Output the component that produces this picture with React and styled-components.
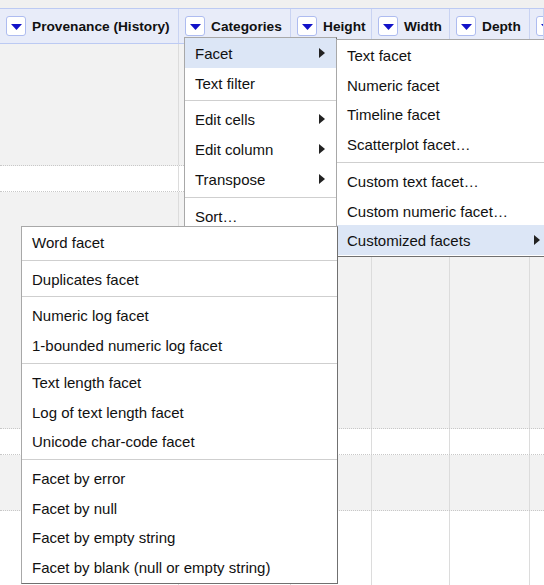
import React from "react";
import styled, { createGlobalStyle } from "styled-components";

const GlobalStyle = createGlobalStyle`
  html, body {
    margin: 0;
    padding: 0;
    background: #ffffff;
  }
  body {
    font-family: "Liberation Sans", Arial, sans-serif;
    color: #111;
  }
`;

const columns = [
  { label: "Provenance (History)", width: 179 },
  { label: "Categories", width: 112 },
  { label: "Height", width: 81 },
  { label: "Width", width: 78 },
  { label: "Depth", width: 80 },
  { label: "", width: null },
];

const rows = [
  { height: 121, shade: true },
  { height: 25, shade: false },
  { height: 236, shade: true },
  { height: 25, shade: false },
  { height: 55, shade: true },
  { height: 100, shade: false, last: true },
];

const columnMenu = [
  { label: "Facet", sub: true, active: true },
  { label: "Text filter" },
  { sep: true },
  { label: "Edit cells", sub: true },
  { label: "Edit column", sub: true },
  { label: "Transpose", sub: true },
  { sep: true },
  { label: "Sort…" },
  { sep: true },
  { label: "View", sub: true },
  { label: "Reconcile", sub: true },
];

const facetMenu = [
  { label: "Text facet" },
  { label: "Numeric facet" },
  { label: "Timeline facet" },
  { label: "Scatterplot facet…" },
  { sep: true },
  { label: "Custom text facet…" },
  { label: "Custom numeric facet…" },
  { label: "Customized facets", sub: true, active: true },
];

const customMenu = [
  { label: "Word facet" },
  { sep: true },
  { label: "Duplicates facet" },
  { sep: true },
  { label: "Numeric log facet" },
  { label: "1-bounded numeric log facet" },
  { sep: true },
  { label: "Text length facet" },
  { label: "Log of text length facet" },
  { label: "Unicode char-code facet" },
  { sep: true },
  { label: "Facet by error" },
  { label: "Facet by null" },
  { label: "Facet by empty string" },
  { label: "Facet by blank (null or empty string)" },
];

function DownTriangle() {
  return (
    <svg width="11" height="6" viewBox="0 0 11 6" aria-hidden="true">
      <polygon points="0,0 11,0 5.5,6" fill="#1212c8" />
    </svg>
  );
}

function RightTriangle() {
  return (
    <svg width="6" height="10" viewBox="0 0 6 10" aria-hidden="true">
      <polygon points="0,0 6,5 0,10" fill="#222" />
    </svg>
  );
}

function Menu({ items, top, left, width, z }) {
  return (
    <MenuBox $top={top} $left={left} $width={width} $z={z}>
      {items.map((item, i) =>
        item.sep ? (
          <MenuSep key={`sep-${i}`} />
        ) : (
          <MenuItem key={item.label} $active={item.active}>
            <span>{item.label}</span>
            {item.sub && <RightTriangle />}
          </MenuItem>
        )
      )}
    </MenuBox>
  );
}

export default function App() {
  return (
    <Page>
      <GlobalStyle />
      <TopStrip />
      <HeaderRow>
        {columns.map((col, i) => (
          <HeaderCell key={`h-${i}`} $w={col.width}>
            <DropButton>
              <DownTriangle />
            </DropButton>
            {col.label && <HeaderLabel>{col.label}</HeaderLabel>}
          </HeaderCell>
        ))}
      </HeaderRow>
      {rows.map((row, r) => (
        <Row key={`r-${r}`} $h={row.height} $shade={row.shade} $last={row.last}>
          {columns.map((col, i) => (
            <Cell key={`c-${r}-${i}`} $w={col.width} />
          ))}
        </Row>
      ))}

      <Menu items={columnMenu} top={37} left={184} width={153} z={1} />
      <Menu items={facetMenu} top={39} left={336} width={216} z={2} />
      <Menu items={customMenu} top={226} left={21} width={317} z={3} />
    </Page>
  );
}

const Page = styled.div`
  position: relative;
  width: 544px;
  height: 585px;
  overflow: hidden;
  background: #ffffff;
`;

const TopStrip = styled.div`
  height: 8px;
  background: #f0f0f0;
`;

const HeaderRow = styled.div`
  display: flex;
  height: 34px;
  background: #e8ecf9;
  border-top: 1px solid #bccaf3;
  border-bottom: 1px solid #bccaf3;
`;

const HeaderCell = styled.div`
  box-sizing: border-box;
  flex: ${(p) => (p.$w ? `0 0 ${p.$w}px` : "1 1 auto")};
  display: flex;
  align-items: center;
  gap: 6px;
  padding-left: 6px;
  border-right: 1px solid #c9d3f2;
  white-space: nowrap;
  overflow: hidden;
`;

const DropButton = styled.div`
  box-sizing: border-box;
  flex: 0 0 auto;
  width: 20px;
  height: 20px;
  display: flex;
  align-items: center;
  justify-content: center;
  background: #ffffff;
  border: 1px solid #aebcf0;
  border-radius: 3px;

  svg {
    margin-top: 1px;
  }
`;

const HeaderLabel = styled.span`
  font-size: 13.7px;
  font-weight: bold;
  color: #111;
`;

const Row = styled.div`
  display: flex;
  height: ${(p) => p.$h}px;
  background: ${(p) => (p.$shade ? "#f2f2f2" : "#ffffff")};
  border-bottom: ${(p) => (p.$last ? "none" : "1px dotted #c8c8c8")};
`;

const Cell = styled.div`
  box-sizing: border-box;
  flex: ${(p) => (p.$w ? `0 0 ${p.$w}px` : "1 1 auto")};
  border-right: ${(p) => (p.$w ? "1px solid #dcdcdc" : "none")};
`;

const MenuBox = styled.div`
  position: absolute;
  top: ${(p) => p.$top}px;
  left: ${(p) => p.$left}px;
  width: ${(p) => p.$width}px;
  z-index: ${(p) => p.$z};
  box-sizing: border-box;
  background: #ffffff;
  border: 1px solid #a8a8a8;
  border-right-color: #707070;
  border-bottom-color: #707070;
  padding-bottom: 1px;
`;

const MenuItem = styled.div`
  display: flex;
  align-items: center;
  justify-content: space-between;
  padding: 7px 11px 5px 10px;
  font-size: 15px;
  line-height: 17.7px;
  color: #111;
  white-space: nowrap;
  background: ${(p) => (p.$active ? "#dce6f6" : "transparent")};

  svg {
    margin-top: -2px;
  }
`;

const MenuSep = styled.div`
  height: 0;
  margin: 3px 0;
  border-top: 1px solid #cfcfcf;
`;
